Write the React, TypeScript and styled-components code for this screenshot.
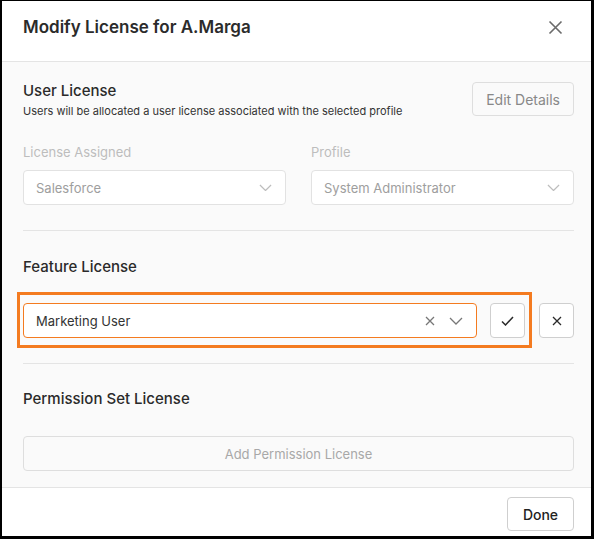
import React from "react";
import styled, { createGlobalStyle } from "styled-components";

const GlobalStyle = createGlobalStyle`
  *, *::before, *::after { box-sizing: border-box; }
  html, body {
    margin: 0;
    padding: 0;
    background: #000;
    font-family: Inter, "Noto Sans", Arial, sans-serif;
  }
`;

const Dialog = styled.div`
  margin: 1px 3px 3px 2px;
  height: 535px;
  background: #fff;
  display: flex;
  flex-direction: column;
  overflow: hidden;
`;

const Header = styled.div`
  height: 61px;
  flex: none;
  display: flex;
  align-items: flex-start;
  justify-content: space-between;
  padding: 14px 24px 0 21px;
  border-bottom: 1px solid #e4e4e4;
`;

const Title = styled.h1`
  margin: 0;
  font-size: 17px;
  line-height: 24px;
  font-weight: 600;
  color: #2b2b2b;
`;

const IconButton = styled.button`
  width: 24px;
  height: 24px;
  padding: 0;
  border: none;
  background: transparent;
  display: flex;
  align-items: center;
  justify-content: center;
  color: #6b6b6b;
  cursor: pointer;
`;

const Body = styled.div`
  flex: 1;
  background: #fafafa;
  padding: 0 17px 0 21px;
  display: flex;
  flex-direction: column;
`;

const Section = styled.section<{ $top: number; $bottom: number; $gap?: number; $divider?: boolean }>`
  padding-top: ${(p) => p.$top}px;
  padding-bottom: ${(p) => p.$bottom}px;
  display: flex;
  flex-direction: column;
  gap: ${(p) => p.$gap ?? 0}px;
  border-bottom: ${(p) => (p.$divider ? "1px solid #e4e4e4" : "none")};
`;

const SectionHead = styled.div`
  display: flex;
  justify-content: space-between;
  align-items: flex-start;
`;

const SectionTitle = styled.h2`
  margin: 0;
  font-size: 15px;
  line-height: 20px;
  font-weight: 500;
  color: #2a2a2a;
`;

const SectionTitleTight = styled(SectionTitle)`
  line-height: 18px;
`;

const SubText = styled.p`
  margin: 3px 0 0;
  font-size: 11px;
  line-height: 16px;
  color: #333;
`;

const GhostButton = styled.button<{ $muted?: boolean; $full?: boolean }>`
  height: ${(p) => (p.$full ? 35 : 34)}px;
  width: ${(p) => (p.$full ? "100%" : "auto")};
  padding: 0 13px;
  border: 1px solid #dedede;
  border-radius: 4px;
  background: #fafafa;
  font-family: inherit;
  font-size: ${(p) => (p.$full ? 13 : 14)}px;
  color: ${(p) => (p.$muted ? "#a8a8a8" : "#888")};
  cursor: pointer;
`;

const Fields = styled.div`
  margin-top: 24px;
  display: grid;
  grid-template-columns: 1fr 1fr;
  column-gap: 25px;
`;

const Field = styled.div`
  display: flex;
  flex-direction: column;
  gap: 9px;
`;

const Label = styled.label`
  font-size: 13px;
  line-height: 18px;
  color: #bdbdbd;
`;

const Select = styled.div<{ $active?: boolean }>`
  height: 35px;
  flex: 1 1 auto;
  min-width: 0;
  display: flex;
  align-items: center;
  gap: 14px;
  padding: 0 13px 0 12px;
  background: #fff;
  border: 1px solid ${(p) => (p.$active ? "#f47b20" : "#e2e2e2")};
  border-radius: 4px;
`;

const SelectValue = styled.span<{ $active?: boolean }>`
  flex: 1;
  font-size: 13px;
  color: ${(p) => (p.$active ? "#333" : "#9e9e9e")};
`;

const Icon = styled.span<{ $color: string }>`
  display: flex;
  color: ${(p) => p.$color};
`;

const FeatureRow = styled.div`
  position: relative;
  display: flex;
  align-items: center;
  gap: 13px;

  &::before {
    content: "";
    position: absolute;
    top: -11px;
    left: -6px;
    width: 515px;
    height: 56px;
    border: 3px solid #f47b20;
    pointer-events: none;
  }
`;

const SquareButton = styled.button<{ $gap?: number }>`
  width: 35px;
  height: 35px;
  flex: none;
  margin-left: ${(p) => p.$gap ?? 0}px;
  padding: 0;
  display: flex;
  align-items: center;
  justify-content: center;
  background: #fff;
  border: 1px solid #cfcfcf;
  border-radius: 4px;
  color: #2a2a2a;
  cursor: pointer;
`;

const Footer = styled.div`
  height: 49px;
  flex: none;
  border-top: 1px solid #e4e4e4;
  display: flex;
  justify-content: flex-end;
  align-items: flex-start;
  padding: 9px 17px 0;
`;

const DoneButton = styled.button`
  height: 34px;
  width: 67px;
  border: 1px solid #cfcfcf;
  border-radius: 4px;
  background: #fff;
  font-family: inherit;
  font-size: 14px;
  font-weight: 500;
  color: #222;
  cursor: pointer;
`;

const Chevron = ({ size = 14 }: { size?: number }) => (
  <svg width={size} height={size / 2 + 1} viewBox="0 0 14 8" fill="none">
    <path d="M1 1l6 6 6-6" stroke="currentColor" strokeWidth="1.3" />
  </svg>
);

const Cross = ({ size }: { size: number }) => (
  <svg width={size} height={size} viewBox="0 0 10 10" fill="none">
    <path d="M1 1l8 8M9 1l-8 8" stroke="currentColor" strokeWidth={size > 12 ? 1.1 : 1.3} />
  </svg>
);

const Check = () => (
  <svg width="13" height="10" viewBox="0 0 13 10" fill="none">
    <path d="M1 5.5l3.5 3.5L12 1" stroke="currentColor" strokeWidth="1.5" />
  </svg>
);

const App = () => (
  <>
    <GlobalStyle />
    <Dialog>
      <Header>
        <Title>Modify License for A.Marga</Title>
        <IconButton aria-label="Close">
          <Cross size={15} />
        </IconButton>
      </Header>
      <Body>
        <Section $top={20} $bottom={25} $divider>
          <SectionHead>
            <div>
              <SectionTitleTight>User License</SectionTitleTight>
              <SubText>Users will be allocated a user license associated with the selected profile</SubText>
            </div>
            <GhostButton>Edit Details</GhostButton>
          </SectionHead>
          <Fields>
            <Field>
              <Label>License Assigned</Label>
              <Select>
                <SelectValue>Salesforce</SelectValue>
                <Icon $color="#bdbdbd"><Chevron size={13} /></Icon>
              </Select>
            </Field>
            <Field>
              <Label>Profile</Label>
              <Select>
                <SelectValue>System Administrator</SelectValue>
                <Icon $color="#bdbdbd"><Chevron size={13} /></Icon>
              </Select>
            </Field>
          </Fields>
        </Section>
        <Section $top={26} $bottom={25} $gap={26} $divider>
          <SectionTitle>Feature License</SectionTitle>
          <FeatureRow>
            <Select $active>
              <SelectValue $active>Marketing User</SelectValue>
              <Icon $color="#777"><Cross size={10} /></Icon>
              <Icon $color="#777"><Chevron size={14} /></Icon>
            </Select>
            <SquareButton aria-label="Confirm">
              <Check />
            </SquareButton>
            <SquareButton aria-label="Remove" $gap={1}>
              <Cross size={10} />
            </SquareButton>
          </FeatureRow>
        </Section>
        <Section $top={25} $bottom={16} $gap={27}>
          <SectionTitle>Permission Set License</SectionTitle>
          <GhostButton $full $muted>Add Permission License</GhostButton>
        </Section>
      </Body>
      <Footer>
        <DoneButton>Done</DoneButton>
      </Footer>
    </Dialog>
  </>
);

export default App;
